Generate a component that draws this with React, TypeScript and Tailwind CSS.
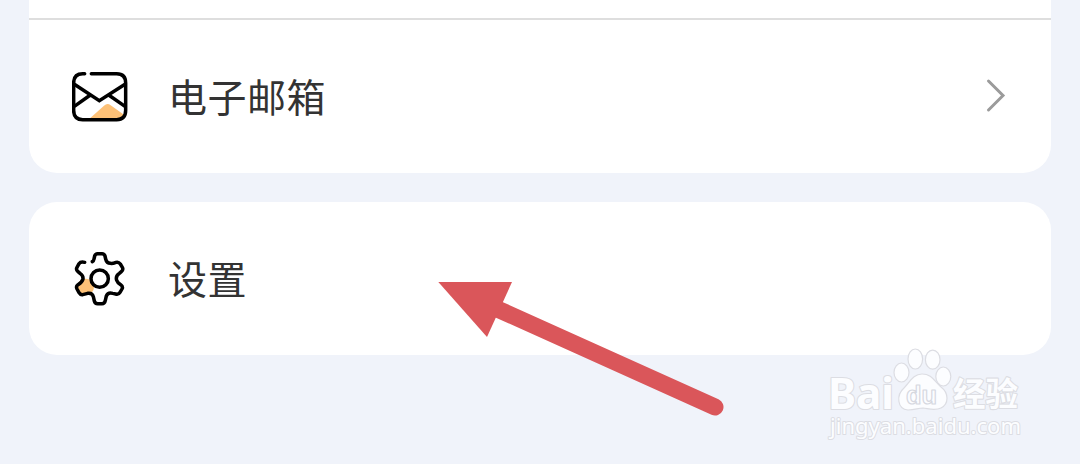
import type { ReactNode } from "react";

function MailIcon() {
  return (
    <svg className="h-[52px] w-[56px]" viewBox="36 32 168 156" fill="none">
      <path d="M90 174 L132 136 Q142 127 152 135 L193 164 Q187 176 174 177 L90 177Z" fill="#fdc177" />
      <g stroke="#000" strokeWidth="10.500" strokeLinecap="round" strokeLinejoin="round">
        <path d="M74 40H68 Q41 40 41 68 V150 Q41 178 68 178 H170 Q197 178 197 150 V68 Q197 40 170 40 H94" />
        <path d="M43 72 L118 121 L195 72M91 104 L43 138M146 104 L195 138" strokeLinecap="butt" strokeLinejoin="miter" />
      </g>
    </svg>
  );
}

function GearIcon() {
  return (
    <svg className="h-[56px] w-[56px]" viewBox="36 30 168 168" fill="none">
      <circle cx="77" cy="141" r="25" fill="#fdc177" />
      <g stroke="#000" strokeWidth="10.500" strokeLinecap="round" strokeLinejoin="round">
        <circle cx="119" cy="116" r="26" fill="#fff" />
        <path d="M97 65 Q101 63 102 57 L104 48 Q106 41 113 41 H126 Q133 41 135 48 L137 57 Q140 70 151 70 Q158 71 168 67 Q176 65 181 72 L187 82 Q191 89 184 95 L178 100 Q166 108 170 121 Q172 128 182 134 Q190 140 186 147 L180 157 Q175 165 167 162 L158 160 Q144 156 139 168 L136 181 Q134 191 126 191 H113 Q105 191 103 183 L100 170 Q97 158 83 160 L68 164 Q61 165 57 158 L51 147 Q47 139 54 134 Q67 126 69 117 Q70 107 61 101 L54 95 Q47 89 51 82 L57 71 Q62 64 74 67" />
      </g>
    </svg>
  );
}

function ChevronIcon() {
  return (
    <svg className="mb-[3px] h-[36px] w-[24px]" viewBox="0 0 24 36" fill="none">
      <path d="M3.500 4 L18 18.500 L3.500 33" stroke="#9b9b9b" strokeWidth="3" strokeLinecap="round" strokeLinejoin="miter" />
    </svg>
  );
}

function Row({ icon, label, trailing }: { icon: ReactNode; label: string; trailing?: ReactNode }) {
  return (
    <div className="flex h-[153px] items-center pr-[42px] pl-[43px]">
      <span className="shrink-0">{icon}</span>
      <span className="ml-[40px] grow pb-[3px] text-[39px] leading-[50px] tracking-[0.5px] text-[#333]">{label}</span>
      {trailing}
    </div>
  );
}

function Watermark() {
  return (
    <svg className="absolute top-[340px] left-[820px] h-[110px] w-[215px]" viewBox="0 0 215 110">
      <g fill="#fcfdff" stroke="#dcdde3" strokeWidth="1.200" strokeLinejoin="round">
        <text x="8" y="68.500" fontSize="43" fontWeight="700" strokeWidth="2.200" paintOrder="stroke" textLength="66" lengthAdjust="spacingAndGlyphs" className="font-['Noto_Sans',sans-serif]">Bai</text>
        <ellipse cx="81.500" cy="32.500" rx="7.500" ry="9.500" />
        <ellipse cx="95.300" cy="19" rx="7.300" ry="10" />
        <ellipse cx="112.700" cy="19.700" rx="7.300" ry="9.500" />
        <ellipse cx="123.300" cy="36.500" rx="7.500" ry="9.500" />
        <path d="M102 34 C93 34 90 42 84 48 C76 55 77 69 88 70 C95 70 98 68 103 68 C110 69 115 71 121 68 C129 64 129 53 121 47 C114 41 112 34 102 34Z" />
        <text x="86" y="64" fontSize="26" fontWeight="700" strokeWidth="1.200" stroke="#d6d8df" textLength="31" lengthAdjust="spacingAndGlyphs" className="font-['Liberation_Sans',sans-serif]">du</text>
        <text x="133" y="66" fontSize="33" fontWeight="700" strokeWidth="2.200" paintOrder="stroke" textLength="65" lengthAdjust="spacingAndGlyphs" className="font-['Noto_Sans_CJK_SC',sans-serif]">经验</text>
        <text x="10" y="94" fontSize="22" strokeWidth="2" paintOrder="stroke" textLength="191" lengthAdjust="spacing" className="font-['Noto_Sans',sans-serif]">jingyan.baidu.com</text>
      </g>
    </svg>
  );
}

function Arrow() {
  return (
    <svg className="absolute top-[270px] left-[425px] h-[155px] w-[310px]" viewBox="0 0 930 465">
      <path d="M215 116 L870 411" stroke="#da565a" strokeWidth="51" strokeLinecap="round" />
      <path d="M40 36 H261 L186 201Z" fill="#da565a" />
    </svg>
  );
}

export default function App() {
  return (
    <main className="relative h-[464px] w-[1080px] overflow-hidden bg-[#f0f3fa] px-[29px] font-['Noto_Sans_CJK_SC',sans-serif]">
      <section className="rounded-b-[28px] bg-white">
        <div className="h-[20px] border-b-2 border-[#dedede]" />
        <Row icon={<MailIcon />} label="电子邮箱" trailing={<ChevronIcon />} />
      </section>
      <section className="mt-[28.500px] rounded-[28px] bg-white">
        <Row icon={<GearIcon />} label="设置" />
      </section>
      <Watermark />
      <Arrow />
    </main>
  );
}
